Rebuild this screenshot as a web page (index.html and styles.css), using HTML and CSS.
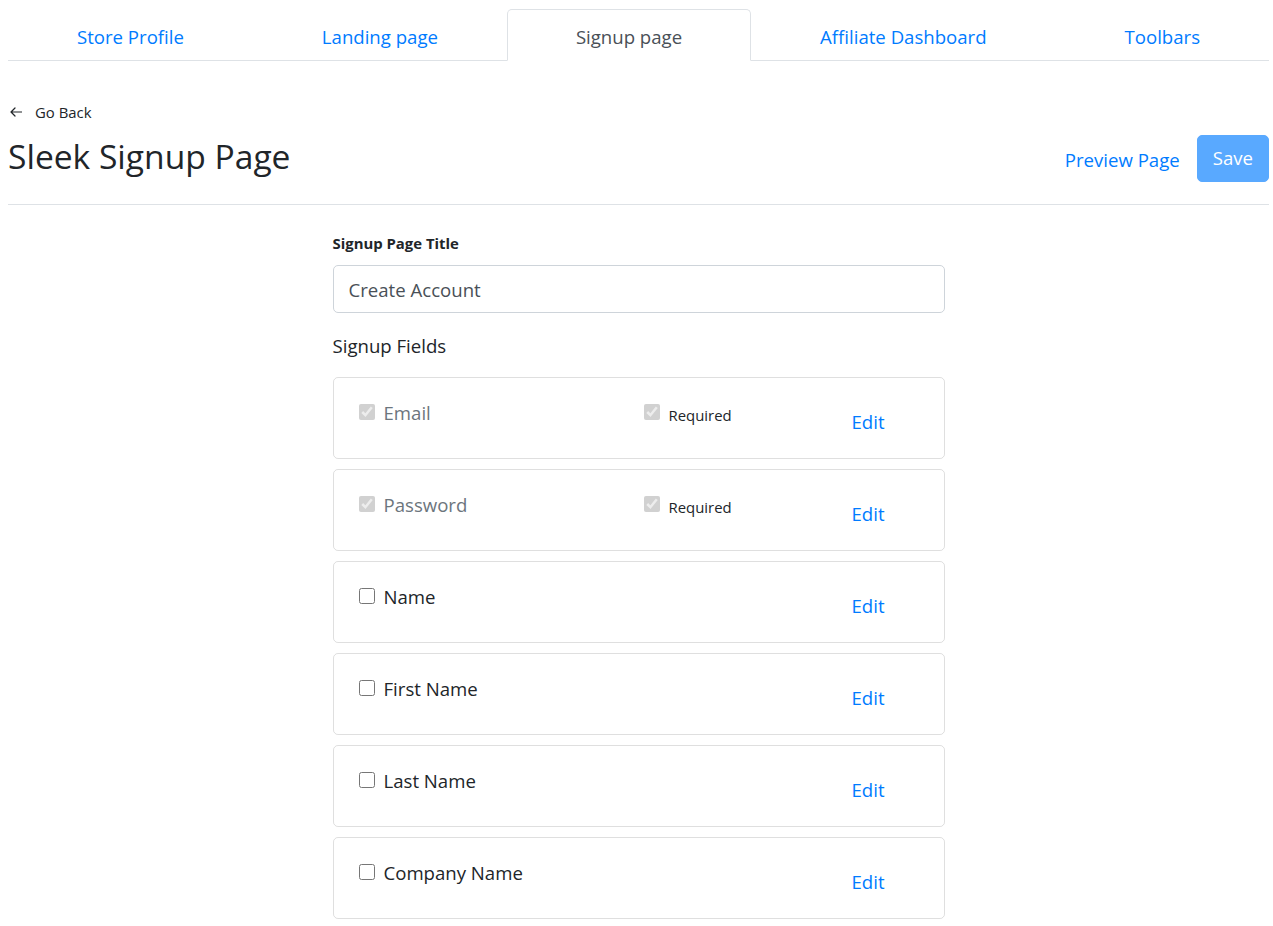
FILE: index.html
```html
<!DOCTYPE html>
<html lang="en">
<head>
<meta charset="utf-8">
<title>Sleek Signup Page</title>
<link rel="stylesheet" href="styles.css">
</head>
<body>
<div class="page">
  <nav class="tabs">
    <a class="tab">Store Profile</a>
    <a class="tab">Landing page</a>
    <a class="tab active">Signup page</a>
    <a class="tab">Affiliate Dashboard</a>
    <a class="tab">Toolbars</a>
  </nav>

  <header class="head">
    <div class="head-left">
      <a class="back">
        <svg class="back-icon" width="12" height="10" viewBox="0 0 12 10" aria-hidden="true">
          <path d="M11.5 5H1M5 1L1 5l4 4" fill="none" stroke="#212529" stroke-width="1.2" stroke-linecap="round" stroke-linejoin="round"/>
        </svg>
        Go Back
      </a>
      <h1 class="title">Sleek Signup Page</h1>
    </div>
    <div class="actions">
      <a class="btn btn-link">Preview Page</a>
      <button class="btn btn-save" disabled>Save</button>
    </div>
  </header>

  <hr class="divider">

  <main class="form">
    <label class="field-label">Signup Page Title</label>
    <input class="text-input" type="text" value="Create Account">
    <h2 class="section">Signup Fields</h2>

    <div class="cards">
      <div class="card">
        <div class="field-row">
          <label class="check muted"><input type="checkbox" checked disabled><span>Email</span></label>
          <label class="check req"><input type="checkbox" checked disabled><span>Required</span></label>
          <a class="edit">Edit</a>
        </div>
      </div>
      <div class="card">
        <div class="field-row">
          <label class="check muted"><input type="checkbox" checked disabled><span>Password</span></label>
          <label class="check req"><input type="checkbox" checked disabled><span>Required</span></label>
          <a class="edit">Edit</a>
        </div>
      </div>
      <div class="card">
        <div class="field-row">
          <label class="check"><input type="checkbox"><span>Name</span></label>
          <span></span>
          <a class="edit">Edit</a>
        </div>
      </div>
      <div class="card">
        <div class="field-row">
          <label class="check"><input type="checkbox"><span>First Name</span></label>
          <span></span>
          <a class="edit">Edit</a>
        </div>
      </div>
      <div class="card">
        <div class="field-row">
          <label class="check"><input type="checkbox"><span>Last Name</span></label>
          <span></span>
          <a class="edit">Edit</a>
        </div>
      </div>
      <div class="card">
        <div class="field-row">
          <label class="check"><input type="checkbox"><span>Company Name</span></label>
          <span></span>
          <a class="edit">Edit</a>
        </div>
      </div>
    </div>
  </main>
</div>
</body>
</html>
```

FILE: styles.css
```css
* { box-sizing: border-box; }

html, body {
  margin: 0;
  padding: 0;
  background: #fff;
}

body {
  font-family: "Open Sans", "Noto Sans", sans-serif;
  color: #212529;
  font-size: 18.6px;
  line-height: 30px;
}

.page {
  padding: 0 4px 0 8px;
}

/* Tabs */
.tabs {
  display: flex;
  margin-top: 9px;
  border-bottom: 1px solid #dee2e6;
}

.tab {
  flex: 1 1 auto;
  text-align: center;
  padding: 12px 20px 8px;
  line-height: 30px;
  font-size: 18.6px;
  color: #007bff;
  border: 1px solid transparent;
  border-radius: 5px 5px 0 0;
  margin-bottom: -1px;
  cursor: pointer;
  white-space: nowrap;
}

.tab.active {
  color: #495057;
  background: #fff;
  border-color: #dee2e6 #dee2e6 #fff;
}

/* Header */
.head {
  display: flex;
  justify-content: space-between;
  align-items: flex-end;
  margin-top: 39px;
}

.back {
  display: flex;
  align-items: center;
  font-size: 14.9px;
  line-height: 24px;
  color: #212529;
  padding-left: 2px;
  cursor: pointer;
}

.back-icon {
  margin-right: 13px;
}

.title {
  margin: 11px 0 5px;
  font-size: 33.6px;
  line-height: 42px;
  font-weight: 400;
  color: #212529;
}

.actions {
  display: flex;
  align-items: center;
}

.btn {
  font-family: inherit;
  font-size: 18.6px;
  line-height: 30px;
  padding: 8px 15px;
  border: 1px solid transparent;
  border-radius: 5px;
  background: transparent;
  cursor: pointer;
}

.btn-link {
  color: #007bff;
  padding: 10px 15px 6px;
  margin-right: 1px;
}

.btn-save {
  color: #fff;
  background: #59a9ff;
  border-color: #59a9ff;
  padding: 7.5px 15px;
}

.divider {
  margin: 22px 0 0;
  border: 0;
  border-top: 1px solid #dee2e6;
}

/* Form */
.form {
  width: 612px;
  margin: 26px auto 0;
}

.field-label {
  display: block;
  font-size: 14.9px;
  line-height: 24px;
  font-weight: 700;
  margin-bottom: 10px;
}

.text-input {
  display: block;
  width: 100%;
  height: 48px;
  padding: 0 15px;
  font-family: inherit;
  font-size: 18.6px;
  color: #495057;
  border: 1px solid #ced4da;
  border-radius: 5px;
  margin-bottom: 18px;
  background: #fff;
}

.section {
  margin: 0 0 16px;
  font-size: 18.6px;
  line-height: 30px;
  font-weight: 400;
}

.cards {
  display: flex;
  flex-direction: column;
  gap: 10px;
}

.card {
  border: 1px solid rgba(0, 0, 0, 0.125);
  border-radius: 5px;
  padding: 25px;
}

.field-row {
  display: grid;
  grid-template-columns: 285px 208px auto;
  height: 30px;
  align-items: start;
}

.check {
  display: flex;
  align-items: flex-start;
  font-size: 18.6px;
  line-height: 30px;
  color: #212529;
  margin-top: -5px;
}

.check input {
  width: 16px;
  height: 16px;
  margin: 6px 9px 0 0;
  flex: none;
}

.check.muted {
  color: #6c757d;
}

.check.req {
  font-size: 14.9px;
  line-height: 34px;
  color: #212529;
}

.edit {
  color: #007bff;
  padding-top: 4px;
  line-height: 30px;
  cursor: pointer;
}
```
